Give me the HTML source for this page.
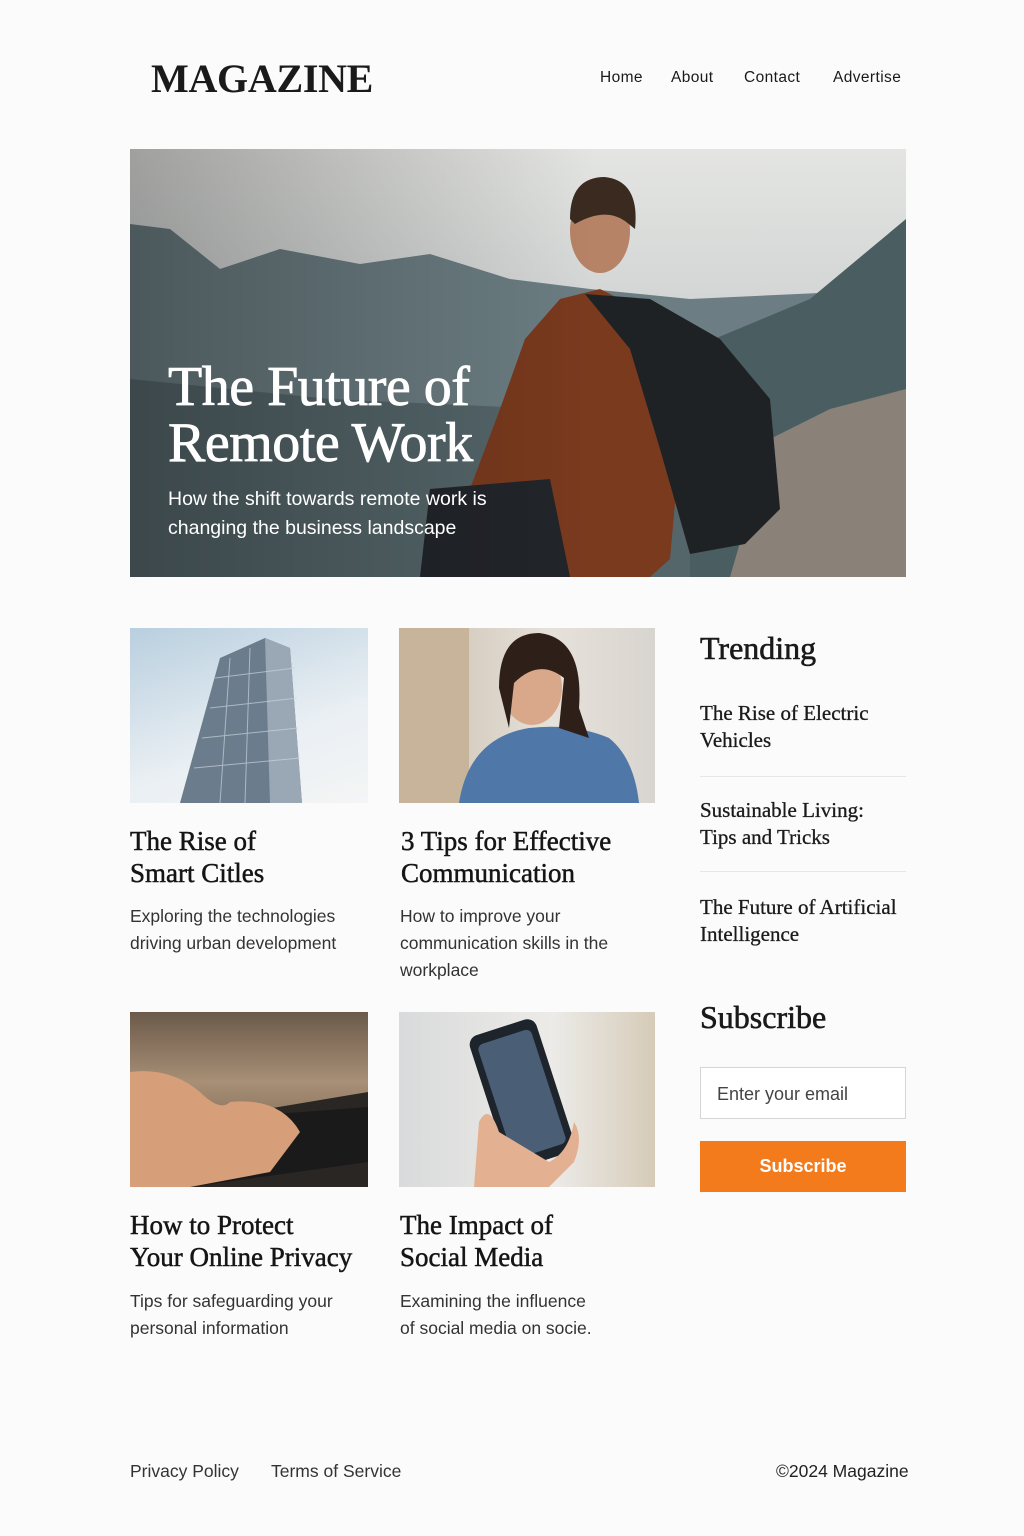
<!DOCTYPE html>
<html><head><meta charset="utf-8"><style>
*{margin:0;padding:0;box-sizing:border-box}
body{width:1024px;height:1536px;background:#fbfbfb;font-family:"Liberation Sans",sans-serif;color:#1a1a1a;position:relative;overflow:hidden}
.serif{font-family:"Liberation Serif",serif}
.abs{position:absolute}
.logo{left:151px;top:55px;font-size:40px;font-weight:bold;letter-spacing:-0.3px}
.nav{top:69px;font-size:15.5px;letter-spacing:0.4px}
.img{position:absolute;overflow:hidden}
h3{position:absolute;font-family:"Liberation Serif",serif;font-weight:normal;font-size:27px;line-height:32px;color:#151515;-webkit-text-stroke:0.5px #151515}
p.d{position:absolute;font-size:17.5px;line-height:27px;color:#333;font-weight:300}
.tr{position:absolute;left:700px;font-family:"Liberation Serif",serif;font-size:21px;line-height:27px;-webkit-text-stroke:0.3px #1a1a1a}
.hr{position:absolute;left:700px;width:206px;height:1px;background:#e6e6e6}
.foot{position:absolute;top:1461px;font-size:17.5px;color:#333}
</style></head><body>
<div class="abs logo serif">MAGAZINE</div>
<div class="abs nav" style="left:600px">Home</div>
<div class="abs nav" style="left:671px">About</div>
<div class="abs nav" style="left:744px">Contact</div>
<div class="abs nav" style="left:833px">Advertise</div>

<div class="img" style="left:130px;top:149px;width:776px;height:428px">
<svg width="776" height="428" viewBox="0 0 776 428">
<defs><linearGradient id="sky" x1="0" y1="0" x2="0" y2="1"><stop offset="0" stop-color="#e4e5e3"/><stop offset="0.35" stop-color="#d3d6d5"/><stop offset="1" stop-color="#a8b0b2"/></linearGradient>
<linearGradient id="shade" x1="0" y1="0" x2="1" y2="0"><stop offset="0" stop-color="#000" stop-opacity="0.3"/><stop offset="0.6" stop-color="#000" stop-opacity="0"/></linearGradient></defs>
<rect width="776" height="428" fill="url(#sky)"/>
<path d="M0 75 L40 80 L90 120 L150 100 L230 115 L300 105 L380 130 L460 140 L560 150 L776 140 L776 428 L0 428Z" fill="#6c7e83"/>
<path d="M560 200 L680 150 L776 70 L776 428 L560 428Z" fill="#4a5e62"/>
<path d="M0 230 L200 250 L420 260 L560 260 L560 428 L0 428Z" fill="#55666a"/>
<path d="M640 290 L700 260 L776 240 L776 428 L600 428Z" fill="#8a8178"/>
<path d="M330 428 L340 340 L370 260 L395 190 L430 150 L470 140 L510 160 L540 200 L550 300 L540 410 L520 428Z" fill="#7a3a1e"/>
<path d="M455 145 L520 150 L590 190 L640 250 L650 360 L615 395 L560 405 L530 300 L500 200Z" fill="#1f2224"/>
<ellipse cx="470" cy="82" rx="30" ry="42" fill="#b78366"/>
<path d="M440 70 Q440 28 475 28 Q510 32 505 80 L495 72 Q475 58 445 75Z" fill="#3a2a20"/>
<path d="M300 340 L420 330 L440 428 L290 428Z" fill="#22252a"/>
<rect width="776" height="428" fill="url(#shade)"/>
</svg>
<div class="abs serif" style="left:38px;top:210px;color:#fff;font-size:56px;line-height:56px;-webkit-text-stroke:0.8px #fff;letter-spacing:-0.5px">The Future of<br>Remote Work</div>
<div class="abs" style="left:38px;top:336px;color:#fff;font-size:19.5px;line-height:29px">How the shift towards remote work is<br>changing the business landscape</div>
</div>

<div class="img" style="left:130px;top:628px;width:238px;height:175px;background:linear-gradient(160deg,#b9cfdf,#e9eff3 60%,#f4f5f5)">
<svg width="238" height="175"><path d="M50 175 L90 30 L135 10 L160 20 L172 175Z" fill="#6b7c8c"/><path d="M135 10 L160 20 L172 175 L140 175Z" fill="#9aa8b5"/>
<g stroke="#c9d3dc" stroke-width="1" opacity="0.7"><line x1="85" y1="50" x2="165" y2="40"/><line x1="80" y1="80" x2="167" y2="70"/><line x1="72" y1="110" x2="168" y2="100"/><line x1="64" y1="140" x2="170" y2="130"/><line x1="100" y1="30" x2="90" y2="175"/><line x1="120" y1="20" x2="115" y2="175"/></g></svg></div>
<div class="img" style="left:399px;top:628px;width:256px;height:175px;background:linear-gradient(90deg,#cbbfae,#e6e1da 60%,#d8d4cf)">
<svg width="256" height="175"><rect x="0" y="0" width="70" height="175" fill="#c8b49a"/><path d="M60 175 Q70 110 130 100 Q175 95 210 110 Q235 130 240 175Z" fill="#4f77a8"/><ellipse cx="133" cy="60" rx="30" ry="37" fill="#d9a78a"/><path d="M100 60 Q100 5 140 5 Q185 10 180 80 L190 110 L160 100 L165 50 Q140 30 115 55 L110 100Z" fill="#2e2018"/></svg></div>
<div class="img" style="left:130px;top:1012px;width:238px;height:175px;background:linear-gradient(180deg,#6b5a4a,#a88f76 40%,#5a4a3d)">
<svg width="238" height="175"><path d="M0 120 L238 80 L238 175 L0 175Z" fill="#2a2623"/><path d="M40 110 L238 95 L238 150 L60 175Z" fill="#1b1a1a"/><path d="M0 60 Q40 55 70 80 Q90 100 100 90 Q150 85 170 120 L140 160 L60 175 L0 175Z" fill="#d69f7a"/></svg></div>
<div class="img" style="left:399px;top:1012px;width:256px;height:175px;background:linear-gradient(90deg,#d9dadb,#ecebe8 60%,#d6cbb8)">
<svg width="256" height="175"><rect x="88" y="12" width="70" height="140" rx="10" transform="rotate(-18 123 82)" fill="#1e242c"/><rect x="95" y="22" width="56" height="120" rx="6" transform="rotate(-18 123 82)" fill="#4a5e75"/><path d="M75 175 L80 110 Q90 90 100 120 L150 150 Q170 140 175 110 Q185 125 175 150 L150 175Z" fill="#e4b092"/></svg></div>

<h3 style="left:130px;top:825px">The Rise of<br>Smart Citles</h3>
<p class="d" style="left:130px;top:903px">Exploring the technologies<br>driving urban development</p>
<h3 style="left:401px;top:825px">3 Tips for Effective<br>Communication</h3>
<p class="d" style="left:400px;top:903px">How to improve your<br>communication skills in the<br>workplace</p>
<h3 style="left:130px;top:1209px">How to Protect<br>Your Online Privacy</h3>
<p class="d" style="left:130px;top:1288px">Tips for safeguarding your<br>personal information</p>
<h3 style="left:400px;top:1209px">The Impact of<br>Social Media</h3>
<p class="d" style="left:400px;top:1288px">Examining the influence<br>of social media on socie.</p>

<div class="abs serif" style="left:700px;top:630px;font-size:32px;-webkit-text-stroke:0.6px #1a1a1a">Trending</div>
<div class="tr" style="top:700px">The Rise of Electric<br>Vehicles</div>
<div class="hr" style="top:776px"></div>
<div class="tr" style="top:797px">Sustainable Living:<br>Tips and Tricks</div>
<div class="hr" style="top:871px"></div>
<div class="tr" style="top:894px">The Future of Artificial<br>Intelligence</div>
<div class="abs serif" style="left:700px;top:999px;font-size:32px;-webkit-text-stroke:0.6px #1a1a1a">Subscribe</div>
<div class="abs" style="left:700px;top:1067px;width:206px;height:52px;border:1px solid #d5d5d5;background:#fff;padding:16px 16px;font-size:18px;color:#444">Enter your email</div>
<div class="abs" style="left:700px;top:1141px;width:206px;height:51px;background:#f47b1c;color:#fff;font-weight:bold;font-size:18px;text-align:center;line-height:51px">Subscribe</div>

<div class="foot" style="left:130px">Privacy Policy</div>
<div class="foot" style="left:271px">Terms of Service</div>
<div class="foot" style="left:776px;color:#222">©2024 Magazine</div>
</body></html>
